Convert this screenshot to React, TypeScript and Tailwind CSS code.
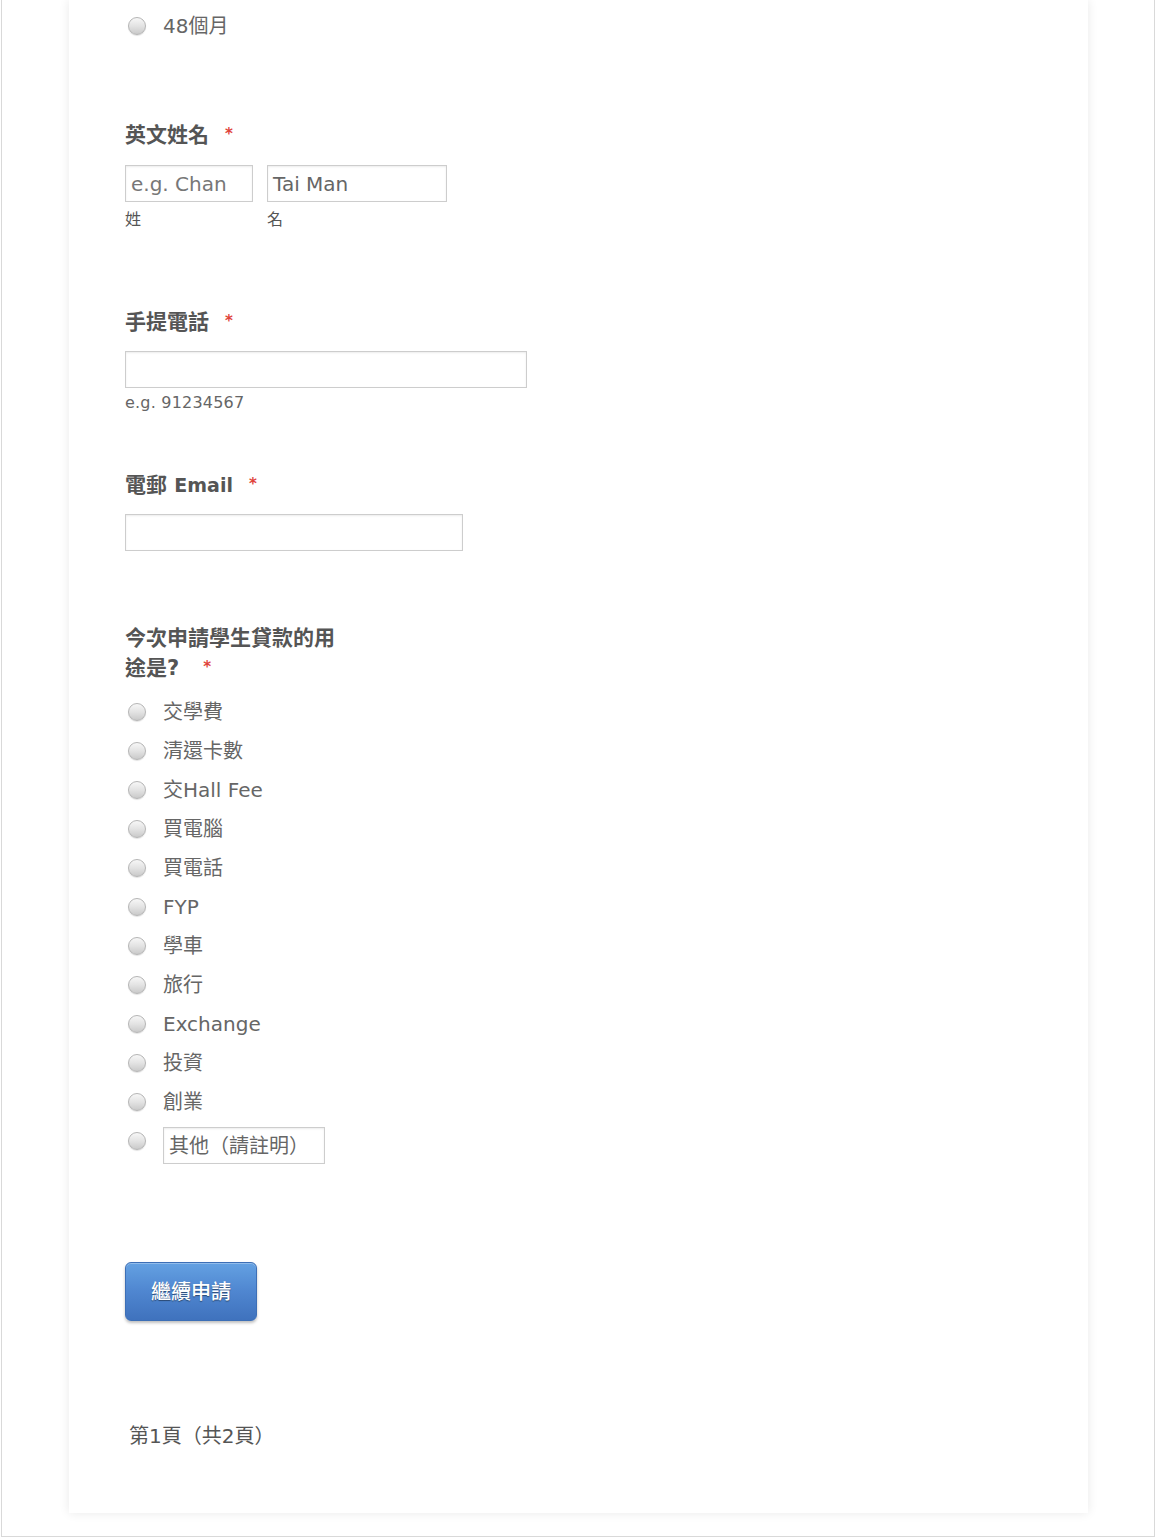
import React from "react";

const FONT = { fontFamily: '"DejaVu Sans", "Noto Sans CJK TC", sans-serif' };

function Radio() {
  return (
    <span className="inline-block w-[18px] h-[18px] rounded-full border border-[#b5b5b5] bg-gradient-to-b from-[#f7f7f7] via-[#e3e3e3] to-[#cacaca] shadow-[0_1px_1px_rgba(0,0,0,0.12)]" />
  );
}

function RadioRow({ label }: { label: string }) {
  return (
    <div className="h-[39px] flex items-center">
      <span className="w-[38px] pl-[3px] flex items-center">
        <Radio />
      </span>
      <span className="text-[20px] text-[#666] leading-none">{label}</span>
    </div>
  );
}

function Star({ gap = "ml-[16px]" }: { gap?: string }) {
  return (
    <span className={"text-[#e0433a] text-[15px] leading-none relative -top-[3px] " + gap}>*</span>
  );
}

function Label({ children, className = "" }: { children: React.ReactNode; className?: string }) {
  return (
    <div className={"text-[21px] font-bold text-[#555] leading-[30px] " + className}>{children}</div>
  );
}

const inputCls =
  "h-[37px] border border-[#cdcdcd] bg-white shadow-[inset_0_1px_2px_rgba(0,0,0,0.08)] px-[5px] text-[20px] text-[#666] flex items-center";

export default function App() {
  const options = [
    "交學費",
    "清還卡數",
    "交Hall Fee",
    "買電腦",
    "買電話",
    "FYP",
    "學車",
    "旅行",
    "Exchange",
    "投資",
    "創業",
  ];
  return (
    <div className="w-[1156px] h-[1538px] bg-white" style={FONT}>
      <div className="ml-[1px] w-[1154px] h-[1537px] border-x border-b border-[#d9d9d9]">
        <div className="ml-[67px] w-[1019px] h-[1513px] bg-white shadow-[0_0_10px_rgba(0,0,0,0.09)] pl-[56px] pt-[6px]">
          <RadioRow label="48個月" />

          <Label className="mt-[75px]">
            英文姓名
            <Star />
          </Label>
          <div className="mt-[15px] flex gap-[14px]">
            <div className="flex flex-col">
              <div className={inputCls + " w-[128px] text-[#777]"}>e.g. Chan</div>
              <div className="mt-[8px] text-[16px] text-[#555] leading-[20px]">姓</div>
            </div>
            <div className="flex flex-col">
              <div className={inputCls + " w-[180px]"}>Tai Man</div>
              <div className="mt-[8px] text-[16px] text-[#555] leading-[20px]">名</div>
            </div>
          </div>

          <Label className="mt-[77px]">
            手提電話
            <Star />
          </Label>
          <div className={inputCls + " mt-[14px] w-[402px]"} />
          <div className="mt-[5px] text-[16px] text-[#666] leading-[20px] tracking-[0.2px]">e.g. 91234567</div>

          <Label className="mt-[57px]">
            電郵 <span className="text-[19px]">Email</span>
            <Star />
          </Label>
          <div className={inputCls + " mt-[14px] w-[338px]"} />

          <Label className="mt-[72px] w-[216px]">
            今次申請學生貸款的用途是?
            <Star gap="ml-[24px]" />
          </Label>

          <div className="mt-[9px]">
            {options.map((o) => (
              <RadioRow key={o} label={o} />
            ))}
            <div className="flex items-start">
              <span className="w-[38px] pl-[3px] h-[39px] flex items-center">
                <Radio />
              </span>
              <div className={inputCls + " mt-[6px] w-[162px]"}>其他（請註明）</div>
            </div>
          </div>

          <button className="mt-[98px] w-[132px] h-[59px] rounded-[6px] border border-[#3d6fb6] bg-gradient-to-b from-[#64a1e2] via-[#4f86d0] to-[#3f72bd] text-white text-[20px] font-medium shadow-[0_2px_3px_rgba(0,0,0,0.25),inset_0_1px_0_rgba(255,255,255,0.3)] [text-shadow:0_1px_1px_rgba(0,0,0,0.45)] flex items-center justify-center">
            繼續申請
          </button>

          <div className="mt-[100px] ml-[4px] text-[20px] text-[#555] leading-[30px]">第1頁（共2頁）</div>
        </div>
      </div>
    </div>
  );
}
